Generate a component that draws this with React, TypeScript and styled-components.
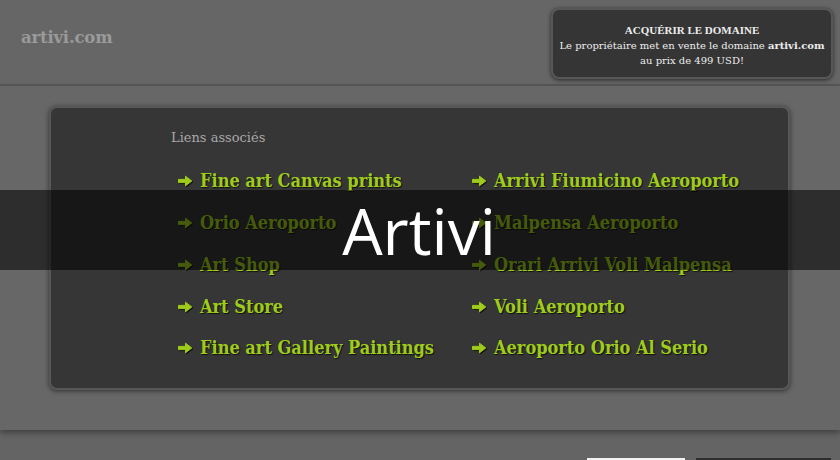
import React from "react";
import styled, { createGlobalStyle } from "styled-components";

const leftLinks = [
  "Fine art Canvas prints",
  "Orio Aeroporto",
  "Art Shop",
  "Art Store",
  "Fine art Gallery Paintings",
];

const rightLinks = [
  "Arrivi Fiumicino Aeroporto",
  "Malpensa Aeroporto",
  "Orari Arrivi Voli Malpensa",
  "Voli Aeroporto",
  "Aeroporto Orio Al Serio",
];

// heavy wide-headed arrow, drawn since the font glyph is too thin
const Arrow = () => (
  <ArrowSvg viewBox="0 0 16 12" width="16" height="12">
    <path
      d="M1.5 4.4h7V1.2L14.8 6 8.5 10.8V7.6h-7z"
      fill="currentColor"
      stroke="currentColor"
      strokeWidth="1"
      strokeLinejoin="round"
    />
  </ArrowSvg>
);

const App = () => {
  return (
    <Page>
      <GlobalStyle />
      <Header>
        <Logo>artivi.com</Logo>
        <DomainBox>
          <DomainTitle>ACQUÉRIR LE DOMAINE</DomainTitle>
          <DomainText>
            Le propriétaire met en vente le domaine <b>artivi.com</b>
          </DomainText>
          <DomainText>au prix de 499 USD!</DomainText>
        </DomainBox>
      </Header>
      <Main>
        <Panel>
          <PanelTitle>Liens associés</PanelTitle>
          <LinkGrid>
            {leftLinks.map((l, i) => (
              <React.Fragment key={l}>
                <LinkItem>
                  <Arrow />
                  {l}
                </LinkItem>
                <LinkItem>
                  <Arrow />
                  {rightLinks[i]}
                </LinkItem>
              </React.Fragment>
            ))}
          </LinkGrid>
        </Panel>
      </Main>
      <Footer>
        <SearchBox />
        <SearchButton />
      </Footer>
      <Banner>Artivi</Banner>
    </Page>
  );
};

export default App;

const GlobalStyle = createGlobalStyle`
  body {
    margin: 0;
    background: #646464;
    font-family: "DejaVu Serif", "Liberation Serif", serif;
  }
`;

const Page = styled.div`
  position: relative;
  width: 840px;
  height: 460px;
  overflow: hidden;
  background: #646464;
`;

const Header = styled.div`
  height: 84px;
  display: flex;
  justify-content: space-between;
  align-items: flex-start;
  padding: 0 7px 0 21px;
  background: #666666;
  border-bottom: 2px solid #575757;
  box-shadow: 0 1px 0 #6e6e6e;
`;

const Logo = styled.div`
  margin-top: 28px;
  font-family: "DejaVu Serif", serif;
  font-weight: bold;
  font-size: 16.5px;
  color: #9a9a9a;
  letter-spacing: -0.2px;
`;

const DomainBox = styled.div`
  margin-top: 8px;
  width: 278px;
  height: 65px;
  box-sizing: content-box;
  padding-top: 2px;
  display: flex;
  flex-direction: column;
  align-items: center;
  justify-content: center;
  background: #353535;
  border: 2px solid #575757;
  border-radius: 8px;
  box-shadow: 0 1px 4px rgba(0, 0, 0, 0.6);
  color: #ededed;
`;

const DomainTitle = styled.div`
  font-family: "Liberation Serif", serif;
  font-weight: bold;
  font-size: 11px;
  line-height: 16px;
`;

const DomainText = styled.div`
  font-family: "DejaVu Serif", serif;
  font-size: 10px;
  line-height: 15px;
  white-space: nowrap;
  b {
    font-weight: bold;
  }
`;

const Main = styled.div`
  padding: 20px 50px 40px 49px;
  background: #676767;
  box-shadow: 0 3px 6px rgba(0, 0, 0, 0.35);
  position: relative;
`;

const Panel = styled.div`
  height: 284px;
  box-sizing: border-box;
  padding: 22px 0 20px 120px;
  background: #363636;
  border: 2px solid #575757;
  border-radius: 8px;
  box-shadow: 0 1px 5px rgba(0, 0, 0, 0.55);
`;

const PanelTitle = styled.div`
  font-family: "DejaVu Serif", serif;
  font-size: 13px;
  line-height: 20px;
  color: #a8a8a8;
  margin-top: -2px;
`;

const LinkGrid = styled.div`
  margin-top: 12px;
  display: grid;
  grid-template-columns: 294px 294px;
  grid-auto-rows: 41.75px;
`;

const LinkItem = styled.div`
  display: flex;
  align-items: center;
  margin-left: 6px;
  font-family: "DejaVu Serif", serif;
  font-weight: bold;
  font-stretch: semi-condensed;
  font-size: 18px;
  color: #9fcc1c;
  text-shadow: 1px 1px 1px #111;
  white-space: nowrap;
`;

const ArrowSvg = styled.svg`
  flex: none;
  margin: 1px 7px 0 0;
  filter: drop-shadow(1px 1px 0.5px #111);
`;

const Footer = styled.div`
  height: 30px;
  display: flex;
  padding: 28px 0 0 587px;
  gap: 11px;
`;

const SearchBox = styled.div`
  width: 98px;
  height: 20px;
  background: #f2f2f2;
`;

const SearchButton = styled.div`
  width: 135px;
  height: 20px;
  background: #2e2e2e;
`;

const Banner = styled.div`
  position: absolute;
  top: 190px;
  left: 0;
  right: 0;
  height: 80px;
  display: flex;
  align-items: center;
  justify-content: center;
  background: rgba(0, 0, 0, 0.56);
  font-family: "Open Sans", sans-serif;
  font-size: 64px;
  color: #ffffff;
  padding-right: 2px;
`;
